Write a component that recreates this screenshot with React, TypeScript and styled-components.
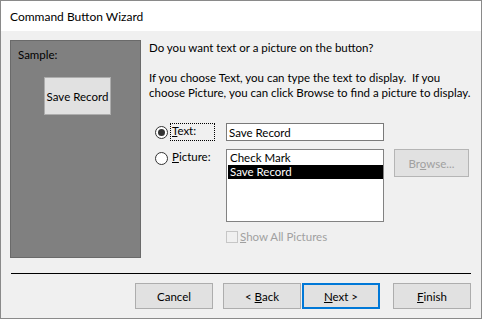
import React, { useState } from 'react';
import styled, { createGlobalStyle } from 'styled-components';

const GlobalStyle = createGlobalStyle`
  html, body {
    margin: 0;
    padding: 0;
    background: #f0f0f0;
  }
  body {
    font-family: 'Lato', 'Liberation Sans', sans-serif;
    font-size: 11.5px;
    color: #000;
  }
`;

const Window = styled.div`
  width: 482px;
  height: 319px;
  box-sizing: border-box;
  border: 1px solid #8a8a8a;
  display: flex;
  flex-direction: column;
  background: #f0f0f0;
  overflow: hidden;
`;

const TitleBar = styled.div`
  flex-shrink: 0;
  height: 30px;
  background: #fff;
  display: flex;
  align-items: center;
  padding-left: 9px;
  font-size: 12px;
`;

const Body = styled.div`
  flex: 1;
  padding: 9px 10px 0 9px;
  display: flex;
  flex-direction: column;
`;

const Main = styled.div`
  flex-shrink: 0;
  display: flex;
  gap: 8px;
`;

const SamplePanel = styled.div`
  flex-shrink: 0;
  width: 131px;
  height: 218px;
  box-sizing: border-box;
  background: #808080;
  border: 1px solid #6a6a6a;
  padding: 7px 0 0 7px;
  display: flex;
  flex-direction: column;
`;

const SampleButton = styled.div`
  margin: 16px 0 0 26px;
  width: 67px;
  height: 38px;
  box-sizing: border-box;
  background: #e1e1e1;
  border: 1px solid #adadad;
  display: flex;
  align-items: center;
  justify-content: center;
  white-space: nowrap;
`;

const Content = styled.div`
  flex: 1;
  display: flex;
  flex-direction: column;
  white-space: nowrap;
`;

const Question = styled.p`
  margin: 0;
  line-height: 16px;
`;

const Explain = styled.p`
  margin: 14px 0 0;
  line-height: 15px;
`;

const Options = styled.div`
  margin-top: 23px;
  display: grid;
  grid-template-columns: 77px 158px auto;
  row-gap: 8px;
  align-items: start;
`;

const RadioLabel = styled.label`
  display: flex;
  align-items: center;
  height: 18px;
  padding-left: 6px;
  gap: 2px;
  cursor: default;
`;

const RadioCircle = styled.span<{ $checked?: boolean }>`
  flex-shrink: 0;
  width: 11px;
  height: 11px;
  border-radius: 50%;
  border: 1px solid #333;
  background: #fff;
  display: flex;
  align-items: center;
  justify-content: center;
  &::after {
    content: '';
    width: 7px;
    height: 7px;
    border-radius: 50%;
    background: ${(p) => (p.$checked ? '#333' : 'transparent')};
  }
`;

const LabelText = styled.span<{ $focused?: boolean }>`
  display: inline-block;
  height: 18px;
  line-height: 14px;
  padding: 0 2px 0 1px;
  width: ${(p) => (p.$focused ? '45px' : 'auto')};
  border: 1px dotted ${(p) => (p.$focused ? '#000' : 'transparent')};
  box-sizing: border-box;
`;

const TextBox = styled.input`
  width: 158px;
  height: 18px;
  box-sizing: border-box;
  border: 1px solid #7a7a7a;
  padding: 0 2px;
  font: inherit;
  outline: none;
`;

const ListBox = styled.div`
  width: 158px;
  height: 73px;
  box-sizing: border-box;
  border: 1px solid #828282;
  background: #fff;
  padding: 1px 0 0 1px;
`;

const ListItem = styled.div<{ $selected?: boolean }>`
  height: 14px;
  line-height: 14px;
  padding-left: 2px;
  background: ${(p) => (p.$selected ? '#000' : 'transparent')};
  color: ${(p) => (p.$selected ? '#fff' : '#000')};
`;

const BrowseButton = styled.button`
  margin-left: 10px;
  width: 75px;
  height: 28px;
  box-sizing: border-box;
  background: #e1e1e1;
  border: 1px solid #b5b5b5;
  color: #a0a0a0;
  font: inherit;
`;

const CheckRow = styled.label`
  grid-column: 2;
  display: flex;
  align-items: center;
  gap: 2px;
  color: #a0a0a0;
  height: 13px;
`;

const CheckBox = styled.span`
  width: 12px;
  height: 12px;
  box-sizing: border-box;
  border: 1px solid #c6c6c6;
  background: #f0f0f0;
`;

const Separator = styled.div`
  flex-shrink: 0;
  margin-top: 15px;
  height: 1px;
  background: #000;
  margin-left: 1px;
`;

const ButtonRow = styled.div`
  flex-shrink: 0;
  margin-top: 9px;
  display: flex;
  justify-content: flex-end;
`;

const WizButton = styled.button<{ $default?: boolean; $gap?: number }>`
  width: 78px;
  height: 26px;
  box-sizing: border-box;
  margin-left: ${(p) => p.$gap ?? 0}px;
  background: #e1e1e1;
  border: ${(p) => (p.$default ? '2px solid #0078d7' : '1px solid #adadad')};
  font: inherit;
  color: #000;
  padding: 0;
`;

export default function App() {
  const [mode, setMode] = useState<'text' | 'picture'>('text');
  const [label, setLabel] = useState('Save Record');
  const [picture, setPicture] = useState('Save Record');

  return (
    <>
      <GlobalStyle />
      <Window>
        <TitleBar>Command Button Wizard</TitleBar>
        <Body>
          <Main>
            <SamplePanel>
              <span>Sample:</span>
              <SampleButton>{label}</SampleButton>
            </SamplePanel>
            <Content>
              <Question>Do you want text or a picture on the button?</Question>
              <Explain>
                If you choose Text, you can type the text to display.&nbsp; If you
                <br />
                choose Picture, you can click Browse to find a picture to display.
              </Explain>
              <Options>
                <RadioLabel onClick={() => setMode('text')}>
                  <RadioCircle $checked={mode === 'text'} />
                  <LabelText $focused>
                    <u>T</u>ext:
                  </LabelText>
                </RadioLabel>
                <TextBox value={label} onChange={(e) => setLabel(e.target.value)} />
                <span />
                <RadioLabel onClick={() => setMode('picture')}>
                  <RadioCircle $checked={mode === 'picture'} />
                  <LabelText>
                    <u>P</u>icture:
                  </LabelText>
                </RadioLabel>
                <ListBox>
                  {['Check Mark', 'Save Record'].map((item) => (
                    <ListItem
                      key={item}
                      $selected={item === picture}
                      onClick={() => setPicture(item)}
                    >
                      {item}
                    </ListItem>
                  ))}
                </ListBox>
                <BrowseButton disabled>
                  Br<u>o</u>wse...
                </BrowseButton>
                <CheckRow>
                  <CheckBox />
                  <span>
                    <u>S</u>how All Pictures
                  </span>
                </CheckRow>
              </Options>
            </Content>
          </Main>
          <Separator />
          <ButtonRow>
            <WizButton>Cancel</WizButton>
            <WizButton $gap={10}>
              &lt; <u>B</u>ack
            </WizButton>
            <WizButton $default $gap={1}>
              <u>N</u>ext &gt;
            </WizButton>
            <WizButton $gap={13}>
              <u>F</u>inish
            </WizButton>
          </ButtonRow>
        </Body>
      </Window>
    </>
  );
}
